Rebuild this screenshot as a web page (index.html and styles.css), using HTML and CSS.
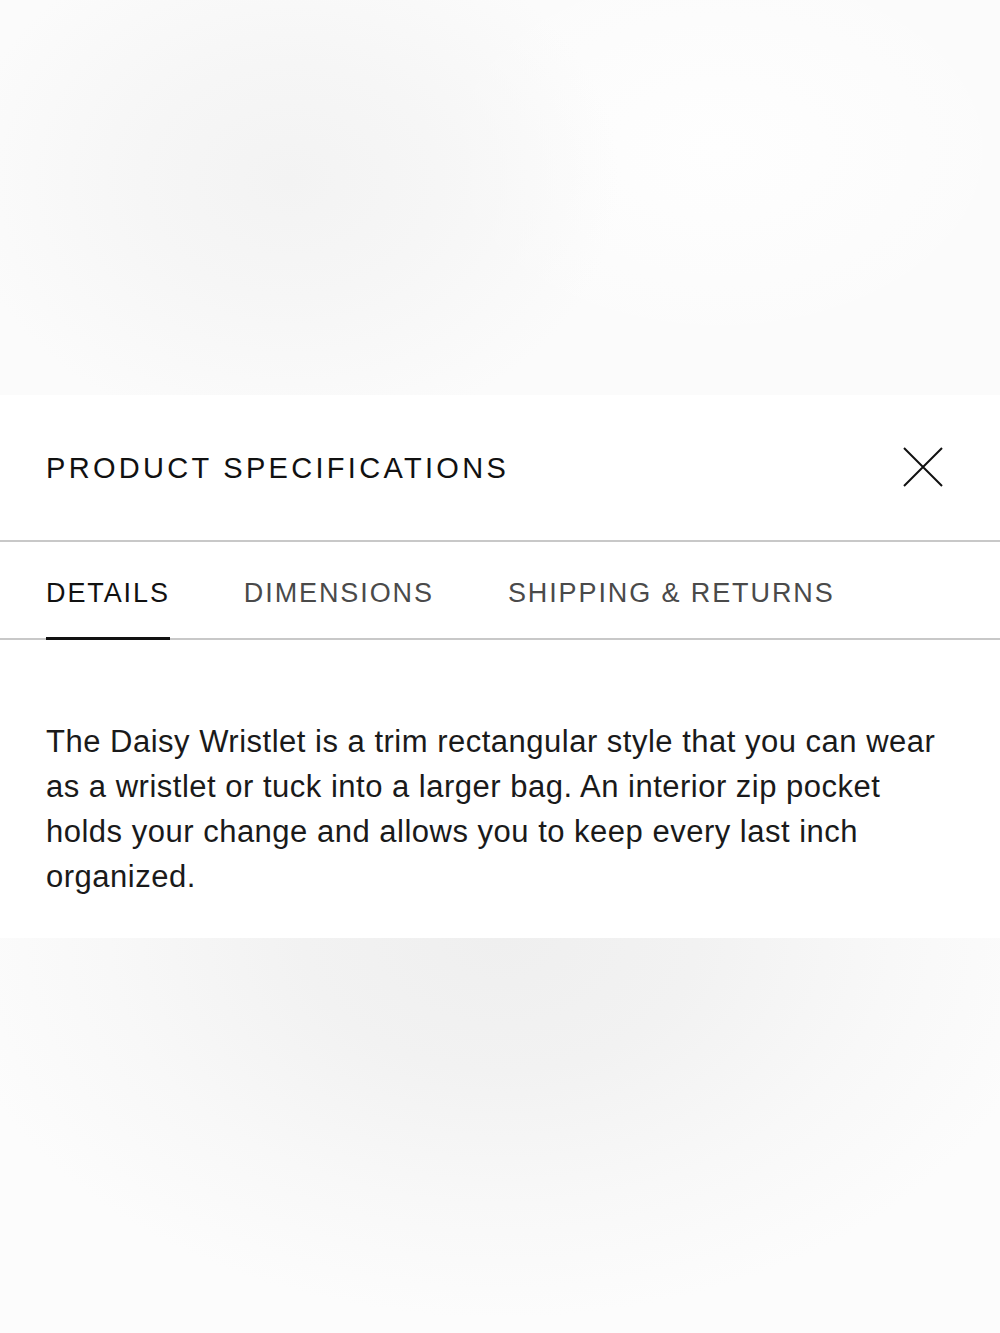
FILE: index.html
```html
<html><head>
<meta name="viewport" content="width=device-width, initial-scale=1">
<title>Product Specifications</title>
<meta http-equiv="Content-Type" content="text/html; charset=utf-8">
<link rel="stylesheet" href="styles.css">
</head><body>
<div class="page">
<div class="backdrop-top"></div>

<section class="panel">
<header class="panel-head">
<h1>PRODUCT SPECIFICATIONS</h1>
<button class="close" aria-label="Close">
<svg width="40" height="40" viewBox="0 0 40 40"><path d="M1 1 L39 39 M39 1 L1 39" stroke="#111" stroke-width="2" fill="none"/></svg>
</button>
</header>

<nav class="tabs">
<a class="tab active" href="#details">DETAILS</a>
<a class="tab" href="#dimensions">DIMENSIONS</a>
<a class="tab" href="#shipping">SHIPPING &amp; RETURNS</a>
</nav>

<div class="tab-body" id="details">
<p>The Daisy Wristlet is a trim rectangular style that you can wear<br>
as a wristlet or tuck into a larger bag. An interior zip pocket<br>
holds your change and allows you to keep every last inch<br>
organized.</p>
</div>
</section>

<div class="backdrop-bottom"></div>
</div>
</body></html>
```

FILE: styles.css
```css
body {
	margin: 0;
	font-family: "Liberation Sans", Arial, sans-serif;
	color: #111;
	background: #fcfcfc;
}

.page {
	display: flex;
	flex-direction: column;
	min-height: 100vh;
}

.backdrop-top {
	height: 395px;
	background:
		radial-gradient(ellipse 330px 260px at 290px 180px, #f3f3f3 0%, #f6f6f6 45%, rgba(250,250,250,0) 100%),
		radial-gradient(ellipse 300px 200px at 720px 150px, #fefefe 0%, rgba(254,254,254,0) 100%),
		#fbfbfb;
}

.backdrop-bottom {
	flex: 1;
	background:
		radial-gradient(ellipse 560px 380px at 500px 0px, #efefef 0%, #f2f2f2 35%, #f8f8f8 70%, rgba(252,252,252,0) 100%),
		#fcfcfc;
}

.panel {
	background: #fff;
}

.panel-head {
	display: flex;
	align-items: center;
	justify-content: space-between;
	height: 145px;
	padding: 0 57px 0 46px;
	border-bottom: 2px solid #c8c8c8;
}

.panel-head h1 {
	margin: 0;
	font-size: 29px;
	font-weight: normal;
	letter-spacing: 3.3px;
	line-height: 40px;
	color: #111;
}

.close {
	border: none;
	background: none;
	padding: 0;
	width: 40px;
	height: 40px;
	margin-top: -2px;
}

.close svg {
	display: block;
}

.tabs {
	display: flex;
	gap: 74px;
	padding: 0 46px;
	border-bottom: 2px solid #c8c8c8;
}

.tab {
	padding: 35px 0 28px;
	font-size: 27px;
	line-height: 32px;
	letter-spacing: 1.9px;
	color: #4a4a4a;
	text-decoration: none;
	border-bottom: 3px solid transparent;
	margin-bottom: -2px;
}

.tab.active {
	color: #111;
	border-bottom-color: #111;
}

.tab-body {
	padding: 79px 30px 39px 46px;
}

.tab-body p {
	margin: 0;
	font-size: 31px;
	line-height: 45px;
	letter-spacing: 0.5px;
	white-space: nowrap;
	color: #1a1a1a;
}
```
